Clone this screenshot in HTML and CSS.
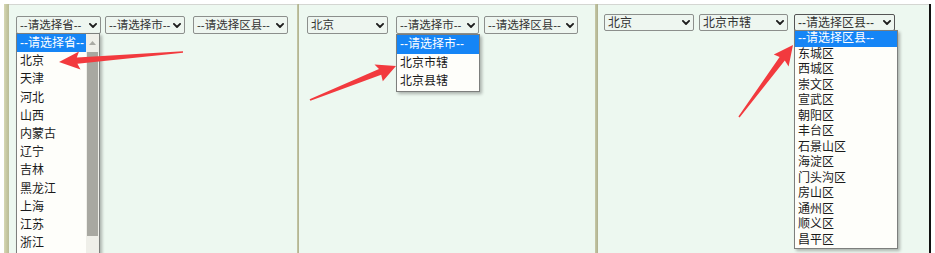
FILE: index.html
```html
<!DOCTYPE html>
<html lang="zh">
<head>
<meta charset="utf-8">
<title>省市区联动</title>
<link rel="stylesheet" href="styles.css">
</head>
<body>
<div class="page">
  <div class="row">
    <div class="edge-white"></div>
    <div class="strip"></div>

    <section class="panel p1">
      <div class="selects">
        <div class="sel s1a open">
          <span class="val">--请选择省--</span>
          <svg class="chev" viewBox="0 0 8 5"><polyline points="0.9,0.9 4,4 7.1,0.9"/></svg>
          <div class="drop d1">
            <ul class="opts">
              <li class="hl">--请选择省--</li>
              <li>北京</li><li>天津</li><li>河北</li><li>山西</li><li>内蒙古</li>
              <li>辽宁</li><li>吉林</li><li>黑龙江</li><li>上海</li><li>江苏</li><li>浙江</li>
            </ul>
            <div class="sbar">
              <div class="sbtn"><svg viewBox="0 0 7 4"><polygon points="0,4 3.5,0 7,4"/></svg></div>
              <div class="thumb"></div>
            </div>
          </div>
        </div>
        <div class="sel s1b"><span class="val">--请选择市--</span><svg class="chev" viewBox="0 0 8 5"><polyline points="0.9,0.9 4,4 7.1,0.9"/></svg></div>
        <div class="sel s1c"><span class="val">--请选择区县--</span><svg class="chev" viewBox="0 0 8 5"><polyline points="0.9,0.9 4,4 7.1,0.9"/></svg></div>
      </div>
    </section>

    <div class="divider d-a"></div>

    <section class="panel p2">
      <div class="selects">
        <div class="sel s2a"><span class="val">北京</span><svg class="chev" viewBox="0 0 8 5"><polyline points="0.9,0.9 4,4 7.1,0.9"/></svg></div>
        <div class="sel s2b open">
          <span class="val">--请选择市--</span>
          <svg class="chev" viewBox="0 0 8 5"><polyline points="0.9,0.9 4,4 7.1,0.9"/></svg>
          <div class="drop d2">
            <ul class="opts">
              <li class="hl">--请选择市--</li>
              <li>北京市辖</li>
              <li>北京县辖</li>
            </ul>
          </div>
        </div>
        <div class="sel s2c"><span class="val">--请选择区县--</span><svg class="chev" viewBox="0 0 8 5"><polyline points="0.9,0.9 4,4 7.1,0.9"/></svg></div>
      </div>
    </section>

    <div class="divider d-b"></div>

    <section class="panel p3">
      <div class="selects">
        <div class="sel s3a"><span class="val">北京</span><svg class="chev" viewBox="0 0 8 5"><polyline points="0.9,0.9 4,4 7.1,0.9"/></svg></div>
        <div class="sel s3b"><span class="val">北京市辖</span><svg class="chev" viewBox="0 0 8 5"><polyline points="0.9,0.9 4,4 7.1,0.9"/></svg></div>
        <div class="sel s3c open focus">
          <span class="val">--请选择区县--</span>
          <svg class="chev" viewBox="0 0 8 5"><polyline points="0.9,0.9 4,4 7.1,0.9"/></svg>
          <div class="drop d3">
            <ul class="opts">
              <li class="hl">--请选择区县--</li>
              <li>东城区</li><li>西城区</li><li>崇文区</li><li>宣武区</li><li>朝阳区</li>
              <li>丰台区</li><li>石景山区</li><li>海淀区</li><li>门头沟区</li><li>房山区</li>
              <li>通州区</li><li>顺义区</li><li>昌平区</li>
            </ul>
          </div>
        </div>
      </div>
    </section>

    <div class="blackline"></div>
    <div class="edge-white end"></div>
  </div>

  <svg class="arrows" viewBox="0 0 935 253" width="935" height="253">
    <polygon points="59,62 79,51.5 76.8,57.4 183,51.2 183,52.8 77.4,63.8 80.5,69.6"/>
    <polygon points="396,66 374.5,64.4 379,69.1 309.6,99.3 310.4,100.7 381.2,74.8 382.8,81.2"/>
    <polygon points="793,45 773.8,54.6 779.6,56.9 738.4,116.5 739.6,117.5 784.8,60.6 788.6,66.4"/>
  </svg>
</div>
</body>
</html>
```

FILE: styles.css
```css
* { box-sizing: border-box; }

html, body {
  margin: 0;
  padding: 0;
  background: #ffffff;
}

body {
  width: 935px;
  height: 253px;
  overflow: hidden;
  font-family: "Liberation Sans", "Noto Sans CJK SC", sans-serif;
  font-size: 11.5px;
  color: #222;
}

.page {
  position: relative;
  width: 935px;
  height: 253px;
  padding-top: 4px;
}

.row {
  display: flex;
  height: 249px;
}

.edge-white {
  width: 4px;
  background: #ffffff;
}

.strip {
  width: 5px;
  background: linear-gradient(90deg, #d6d7b4, #c4c6a0 60%, #b9bb98);
}

.panel {
  background: #edf8f0;
  border-top: 1px solid #d4d6d2;
}
.p1 { width: 288px; padding: 11px 0 0 7px; }
.p2 { width: 296px; padding: 11px 0 0 8px; }
.p3 { width: 331px; padding: 9px 0 0 6px; font-size: 12px; }

.divider {
  background: linear-gradient(90deg, #c6c8a6, #aeb08e);
}
.d-a { width: 2px; }
.d-b { width: 3px; }

.blackline {
  width: 2px;
  background: #111;
}

.selects {
  display: flex;
  align-items: flex-start;
}

.sel {
  position: relative;
  display: flex;
  align-items: center;
  height: 18px;
  padding: 0 3px 0 3px;
  border: 1px solid #8c8f8c;
  border-radius: 2px;
  background: #eef6f0;
  color: #333;
  line-height: 16px;
  white-space: nowrap;
}
.sel .val { flex: 1; }
.sel .chev {
  width: 8px;
  height: 5px;
  flex: none;
  margin-left: 1px;
}
.sel .chev polyline {
  fill: none;
  stroke: #1d1d1d;
  stroke-width: 1.8;
  stroke-linecap: round;
  stroke-linejoin: round;
}
.sel.focus { border-color: #555; }

/* panel 1 widths */
.s1a { width: 85px; }
.s1b { width: 80px; margin-left: 4px; }
.s1c { width: 95px; margin-left: 8px; }

/* panel 2 widths */
.s2a { width: 81px; }
.s2b { width: 83px; margin-left: 8px; }
.s2c { width: 94px; margin-left: 5px; }

/* panel 3 widths */
.p3 .sel { height: 17px; }
.s3a { width: 90px; }
.s3b { width: 89px; margin-left: 5px; }
.s3c { width: 101px; margin-left: 6px; }

/* dropdown lists (overlays) */
.drop {
  position: absolute;
  left: -1px;
  top: 16px;
  background: #fefefa;
  border: 1px solid #7d7f7d;
  box-shadow: 2px 2px 3px rgba(0, 0, 0, 0.28);
  color: #1a1a1a;
  z-index: 2;
}
.opts {
  list-style: none;
  margin: 0;
  padding: 0;
}
.opts li {
  padding-left: 3px;
  white-space: nowrap;
}
.opts li.hl {
  background: #1585f6;
  color: #ffffff;
}

.d1 {
  width: 84px;
  height: 225px;
  display: flex;
  overflow: hidden;
  font-size: 12px;
}
.d1 .opts { flex: 1; }
.d1 .opts li { height: 18.2px; line-height: 18px; }

.sbar {
  width: 13px;
  flex: none;
  background: #efefe9;
  display: flex;
  flex-direction: column;
}
.sbtn {
  height: 18px;
  display: flex;
  align-items: center;
  justify-content: center;
}
.sbtn svg { width: 7px; height: 4px; }
.sbtn polygon { fill: #a9a9a3; }
.thumb {
  height: 184px;
  margin: 0 1px;
  background: #a8a8a1;
}

.d2 {
  width: 84px;
  top: 17px;
  font-size: 12px;
}
.d2 .opts li { height: 18.7px; line-height: 18.5px; }

.d3 {
  width: 104px;
  top: 15px;
}
.d3 .opts li { height: 15.5px; line-height: 15.5px; }

.arrows {
  position: absolute;
  left: 0;
  top: 0;
  z-index: 5;
  pointer-events: none;
}
.arrows polygon { fill: #f23a3e; }
```
